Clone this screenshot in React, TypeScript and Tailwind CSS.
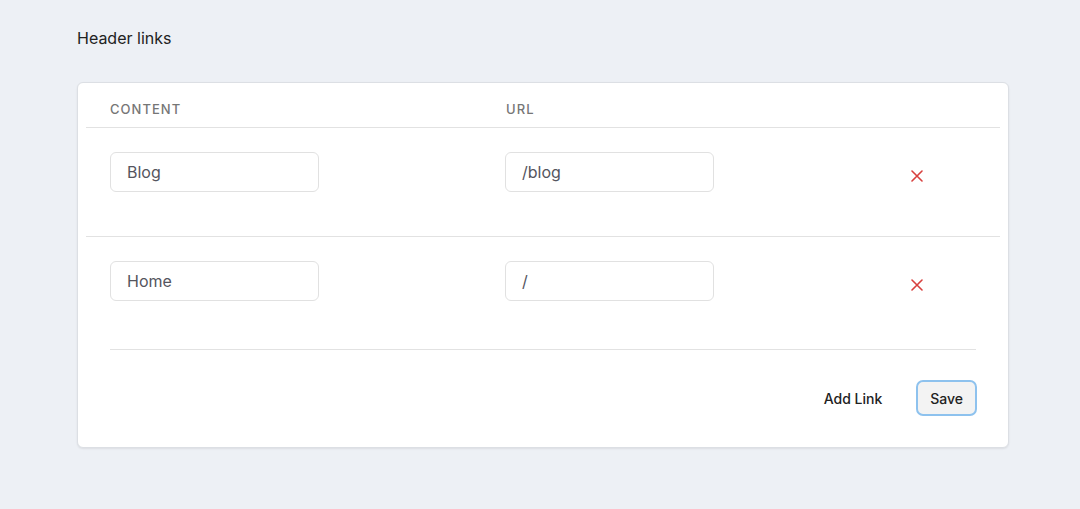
import React from 'react';

const links = [
  { id: 1, content: 'Blog', url: '/blog' },
  { id: 2, content: 'Home', url: '/' },
];

function RemoveIcon() {
  return (
    <svg width="12" height="12" viewBox="0 0 12 12" fill="none" stroke="#d8403e" strokeWidth="1.6" strokeLinecap="round">
      <path d="M1 1L11 11M11 1L1 11" />
    </svg>
  );
}

export default function App() {
  return (
    <div className="min-h-[509px] w-full bg-[#edf0f5] px-[77px] pt-[28px] pb-[62px]" style={{ fontFamily: 'Inter, "Noto Sans", sans-serif' }}>
      <h2 className="text-[16px] leading-[20px] text-[#222] mb-[34px]">Header links</h2>

      <div className="w-[932px] rounded-[6px] border border-[#dcdfe4] bg-white shadow-[0_1px_2px_rgba(0,0,0,0.08)]">
        <div className="px-[8px]">
          <div className="flex h-[45px] items-end border-b border-[#e2e2e2] pb-[8px] text-[13px] font-medium uppercase tracking-[0.08em] text-[#767676]">
            <div className="w-[396px] pl-[24px]">Content</div>
            <div className="w-[396px] pl-[24px]">URL</div>
            <div className="flex-1" />
          </div>

          {links.map((link, i) => (
            <div
              key={link.id}
              className={`flex h-[109px] items-start pt-[24px] ${i < links.length - 1 ? 'border-b border-[#e2e2e2]' : ''}`}
            >
              <div className="w-[396px] pl-[24px]">
                <div className="flex h-[40px] w-[209px] items-center rounded-[6px] border border-[#e1e1e1] px-[16px] text-[16px] text-[#55555e]">
                  {link.content}
                </div>
              </div>
              <div className="w-[396px] pl-[23px]">
                <div className="flex h-[40px] w-[209px] items-center rounded-[6px] border border-[#e1e1e1] px-[16px] text-[16px] text-[#55555e]">
                  {link.url}
                </div>
              </div>
              <div className="flex h-[47px] flex-1 items-center pl-[33px]">
                <RemoveIcon />
              </div>
            </div>
          ))}

          <div className="px-[24px] pt-[3px]">
            <div className="flex items-center justify-end border-t border-[#e2e2e2] pt-[30px] pb-[31px]">
              <button className="mr-[34px] text-[14px] font-medium text-[#222]">Add Link</button>
              <button className="-mr-[1px] h-[36px] rounded-[7px] border-2 border-[#8ec2ee] bg-[#f3f3f3] px-[12px] text-[14px] font-medium text-[#222]">
                Save
              </button>
            </div>
          </div>
        </div>
      </div>
    </div>
  );
}
